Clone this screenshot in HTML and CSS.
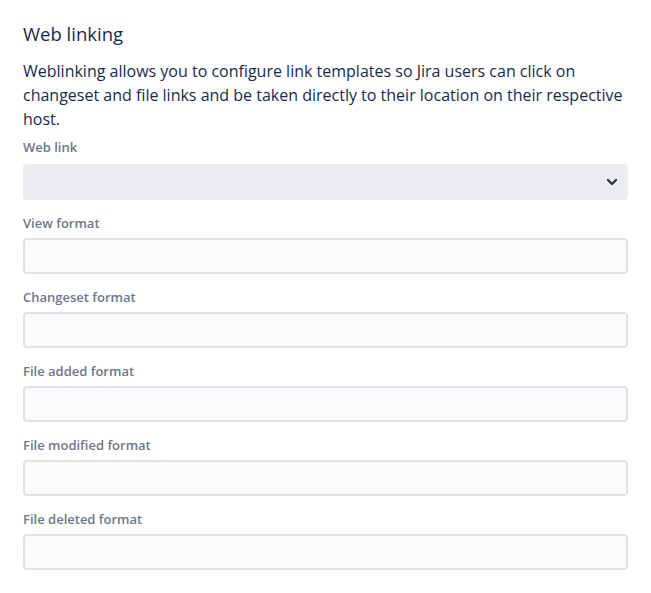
FILE: index.html
```html
<!DOCTYPE html>
<html>
<head>
<meta charset="utf-8">
<link rel="stylesheet" href="styles.css">
</head>
<body>
<div class="panel">
  <h2 class="title">Web linking</h2>
  <p class="desc">Weblinking allows you to configure link templates so Jira users can click on changeset and file links and be taken directly to their location on their respective host.</p>
  <div class="field field-first">
    <label class="label">Web link</label>
    <div class="select">
      <svg class="chev" width="12" height="8" viewBox="0 0 12 8"><path d="M2 2 L6 6 L10 2" fill="none" stroke="#253858" stroke-width="2.4" stroke-linecap="round" stroke-linejoin="round"/></svg>
    </div>
  </div>
  <div class="field">
    <label class="label">View format</label>
    <div class="input"></div>
  </div>
  <div class="field">
    <label class="label">Changeset format</label>
    <div class="input"></div>
  </div>
  <div class="field">
    <label class="label">File added format</label>
    <div class="input"></div>
  </div>
  <div class="field">
    <label class="label">File modified format</label>
    <div class="input"></div>
  </div>
  <div class="field">
    <label class="label">File deleted format</label>
    <div class="input"></div>
  </div>
</div>
</body>
</html>
```
FILE: styles.css
```css
html, body {
  margin: 0;
  padding: 0;
  background: #ffffff;
}
body {
  font-family: "Open Sans", "Noto Sans", sans-serif;
  color: #172b4d;
}
.panel {
  width: 605px;
  padding: 22px 23px 0 23px;
}
.title {
  margin: 0;
  font-size: 18.5px;
  font-weight: 400;
  line-height: 24px;
  color: #172b4d;
}
.desc {
  margin: 13px 0 8px 0;
  font-size: 16px;
  line-height: 24px;
  color: #172b4d;
}
.field {
  display: flex;
  flex-direction: column;
  margin-bottom: 15px;
}
.label {
  font-size: 13px;
  line-height: 16px;
  font-weight: 600;
  color: #6b778c;
  margin-bottom: 7px;
}
.field-first .label {
  margin-bottom: 9px;
}
.select {
  height: 36px;
  border-radius: 4px;
  background: #ebecf0;
  display: flex;
  align-items: center;
  justify-content: flex-end;
  padding-right: 10px;
}
.input {
  height: 32px;
  border: 2px solid #dfe1e6;
  border-radius: 4px;
  background: #fafbfc;
}
```
